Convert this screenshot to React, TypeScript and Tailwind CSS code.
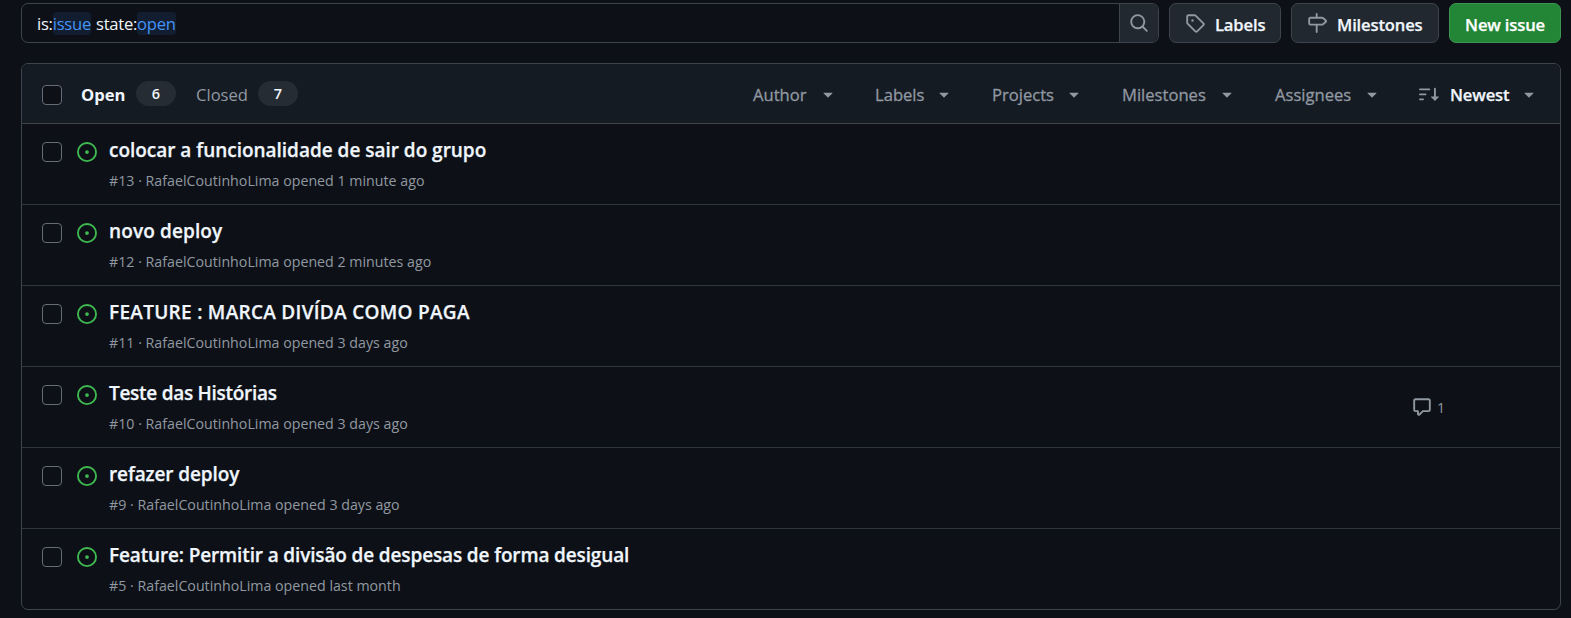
import React from "react";

const ICONS = {
  search:
    "M10.68 11.74a6 6 0 0 1-7.922-8.982 6 6 0 0 1 8.982 7.922l3.04 3.04a.749.749 0 0 1-.326 1.275.749.749 0 0 1-.734-.215ZM11.5 7a4.499 4.499 0 1 0-8.997 0A4.499 4.499 0 0 0 11.5 7Z",
  tag: "M1 7.775V2.75C1 1.784 1.784 1 2.75 1h5.025c.464 0 .91.184 1.238.513l6.25 6.25a1.75 1.75 0 0 1 0 2.474l-5.026 5.026a1.75 1.75 0 0 1-2.474 0l-6.25-6.25A1.752 1.752 0 0 1 1 7.775Zm1.5 0c0 .066.026.13.073.177l6.25 6.25a.25.25 0 0 0 .354 0l5.025-5.025a.25.25 0 0 0 0-.354l-6.25-6.25a.25.25 0 0 0-.177-.073H2.75a.25.25 0 0 0-.25.25ZM6 5a1 1 0 1 1 0 2 1 1 0 0 1 0-2Z",
  milestone:
    "M7.75 0a.75.75 0 0 1 .75.75V3h3.634c.414 0 .814.147 1.13.414l2.07 1.75a1.75 1.75 0 0 1 0 2.672l-2.07 1.75a1.75 1.75 0 0 1-1.13.414H8.5v5.25a.75.75 0 0 1-1.5 0V10H2.75A1.75 1.75 0 0 1 1 8.25v-3.5C1 3.784 1.784 3 2.75 3H7V.75A.75.75 0 0 1 7.75 0Zm4.384 8.5a.25.25 0 0 0 .161-.06l2.07-1.75a.248.248 0 0 0 0-.38l-2.07-1.75a.25.25 0 0 0-.161-.06H2.75a.25.25 0 0 0-.25.25v3.5c0 .138.112.25.25.25h9.384Z",
  sort: "M0 4.25a.75.75 0 0 1 .75-.75h7.5a.75.75 0 0 1 0 1.5H.75A.75.75 0 0 1 0 4.25Zm0 4a.75.75 0 0 1 .75-.75h4.5a.75.75 0 0 1 0 1.5H.75A.75.75 0 0 1 0 8.25Zm0 4a.75.75 0 0 1 .75-.75h2.5a.75.75 0 0 1 0 1.5H.75a.75.75 0 0 1-.75-.75ZM13.5 10h2.25a.25.25 0 0 1 .177.427l-3 3a.25.25 0 0 1-.354 0l-3-3A.25.25 0 0 1 9.75 10H12V3.75a.75.75 0 0 1 1.5 0V10Z",
  caret:
    "m4.427 7.427 3.396 3.396a.25.25 0 0 0 .354 0l3.396-3.396A.25.25 0 0 0 11.396 7H4.604a.25.25 0 0 0-.177.427Z",
  comment:
    "M1 2.75C1 1.784 1.784 1 2.75 1h10.5c.966 0 1.75.784 1.75 1.75v7.5A1.75 1.75 0 0 1 13.25 12H9.06l-2.573 2.573A1.458 1.458 0 0 1 4 13.543V12H2.75A1.75 1.75 0 0 1 1 10.25Zm1.75-.25a.25.25 0 0 0-.25.25v7.5c0 .138.112.25.25.25h2a.75.75 0 0 1 .75.75v2.19l2.72-2.72a.749.749 0 0 1 .53-.22h4.5a.25.25 0 0 0 .25-.25v-7.5a.25.25 0 0 0-.25-.25Z",
  issue:
    "M8 9.5a1.5 1.5 0 1 0 0-3 1.5 1.5 0 0 0 0 3Z M8 0a8 8 0 1 1 0 16A8 8 0 0 1 8 0ZM1.5 8a6.5 6.5 0 1 0 13 0 6.5 6.5 0 0 0-13 0Z",
};

interface IconProps {
  name: keyof typeof ICONS;
  color?: string;
  className?: string;
}

function Icon({ name, color = "text-[#9198a1]", className = "" }: IconProps) {
  return (
    <svg viewBox="0 0 16 16" className={`size-5 shrink-0 fill-current ${color} ${className}`}>
      <path d={ICONS[name]} />
    </svg>
  );
}

function Checkbox() {
  return (
    <span
      role="checkbox"
      aria-checked={false}
      className="size-5 shrink-0 rounded-[4px] border border-[#656c76] bg-[#0d1117]"
    />
  );
}

function Counter({ value }: { value: number }) {
  return (
    <span className="mb-[3px] flex h-[25px] w-10 items-center justify-center rounded-full bg-[#262c34] pt-px text-[14.5px] font-semibold">
      {value}
    </span>
  );
}

const ISSUES = [
  { id: 13, title: "colocar a funcionalidade de sair do grupo", when: "1 minute ago", tracking: "tracking-[-0.02px]" },
  { id: 12, title: "novo deploy", when: "2 minutes ago", tracking: "tracking-[0.12px]" },
  { id: 11, title: "FEATURE : MARCA DIVÍDA COMO PAGA", when: "3 days ago", tracking: "tracking-[0.29px]" },
  { id: 10, title: "Teste das Histórias", when: "3 days ago", comments: 1, tracking: "tracking-[-0.28px]" },
  { id: 9, title: "refazer deploy", when: "3 days ago", tracking: "tracking-[-0.12px]" },
  {
    id: 5,
    title: "Feature: Permitir a divisão de despesas de forma desigual",
    when: "last month",
    tracking: "tracking-[-0.14px]",
  },
];

const FILTERS = [
  { label: "Author", width: "w-[122px]", text: "w-[65px]" },
  { label: "Labels", width: "w-[117px]", text: "w-[59px]" },
  { label: "Projects", width: "w-[130px]", text: "w-[72px]" },
  { label: "Milestones", width: "w-[153px]", text: "w-[95px]" },
  { label: "Assignees", width: "w-[144px]", text: "w-[87px]" },
];

export default function App() {
  return (
    <div className="h-[618px] overflow-hidden whitespace-nowrap bg-[#0d1117] pt-[3px] pr-[10px] pl-[21px] font-['Open_Sans','Noto_Sans',sans-serif] text-[16.6px] text-[#f0f6fc]">
      <div className="flex h-10 gap-[10px]">
        <div className="flex flex-1 overflow-hidden rounded-[7px] border border-[#3d444d]">
          <div className="flex flex-1 items-center pt-px pl-[15px] leading-[23px] tracking-[-0.25px]">
            <span>is:</span>
            <span className="rounded-[3px] bg-[#121d2f] text-[#4493f8]">issue</span>
            <span className="ml-[5px]">state:</span>
            <span className="rounded-[3px] bg-[#121d2f] text-[#4493f8]">open</span>
          </div>
          <button className="flex w-[39px] items-center justify-center border-l border-[#3d444d] bg-[#212830]">
            <Icon name="search" />
          </button>
        </div>
        <button className="flex w-28 items-center rounded-[7px] border border-[#3d444d] bg-[#212830] pl-[15px] font-semibold">
          <Icon name="tag" />
          <span className="ml-[10px] pt-[4px] tracking-[-0.15px] [-webkit-text-stroke:0.25px]">Labels</span>
        </button>
        <button className="flex w-[148px] items-center rounded-[7px] border border-[#3d444d] bg-[#212830] pl-[15px] font-semibold">
          <Icon name="milestone" />
          <span className="ml-[10px] pt-[4px] tracking-[-0.15px] [-webkit-text-stroke:0.25px]">Milestones</span>
        </button>
        <button className="flex w-28 items-center justify-center rounded-[7px] border border-[#3c9550] bg-[#238636] pt-[4px] font-semibold tracking-[-0.15px] text-white [-webkit-text-stroke:0.25px]">
          New issue
        </button>
      </div>

      <div className="mt-5 overflow-hidden rounded-[7px] border border-[#3d444d]">
        <div className="flex h-[60px] items-center border-b border-[#3d444d] bg-[#151b23] pt-[2px] pl-5">
          <Checkbox />
          <span className="ml-[19px] w-[55px] pt-px font-bold">Open</span>
          <Counter value={6} />
          <span className="ml-5 w-[62px] pt-px text-[#9198a1]">Closed</span>
          <Counter value={7} />
          <div className="ml-auto flex items-center">
            {FILTERS.map((f) => (
              <div key={f.label} className={`flex items-center ${f.width}`}>
                <span
                  className={`shrink-0 pt-px font-medium text-[#9198a1] [-webkit-text-stroke:0.3px] ${f.text}`}
                >
                  {f.label}
                </span>
                <Icon name="caret" />
              </div>
            ))}
            <Icon name="sort" />
            <span className="ml-[11px] w-[69px] pt-px font-semibold tracking-[-0.15px] [-webkit-text-stroke:0.25px]">
              Newest
            </span>
            <Icon name="caret" className="mr-[21px]" />
          </div>
        </div>

        {ISSUES.map((issue) => (
          <div
            key={issue.id}
            className="flex h-[81px] items-start border-b border-[#30363e] pt-[18px] pl-5 last:h-20 last:border-b-0"
          >
            <Checkbox />
            <Icon name="issue" color="text-[#3fb950]" className="ml-[15px]" />
            <div className="-mt-[7px] ml-3 flex-1">
              <div
                className={`text-[19px] leading-[30px] font-semibold [-webkit-text-stroke:0.25px] ${issue.tracking}`}
              >
                {issue.title}
              </div>
              <div className="mt-[6px] text-[14.22px] leading-5 text-[#9198a1]">
                #{issue.id} · RafaelCoutinhoLima opened {issue.when}
              </div>
            </div>
            {issue.comments && (
              <div className="mt-[11px] mr-[115px] flex items-center text-[14px] leading-5 text-[#9198a1]">
                <Icon name="comment" />
                <span className="ml-[5px] pt-[2px]">{issue.comments}</span>
              </div>
            )}
          </div>
        ))}
      </div>
    </div>
  );
}
